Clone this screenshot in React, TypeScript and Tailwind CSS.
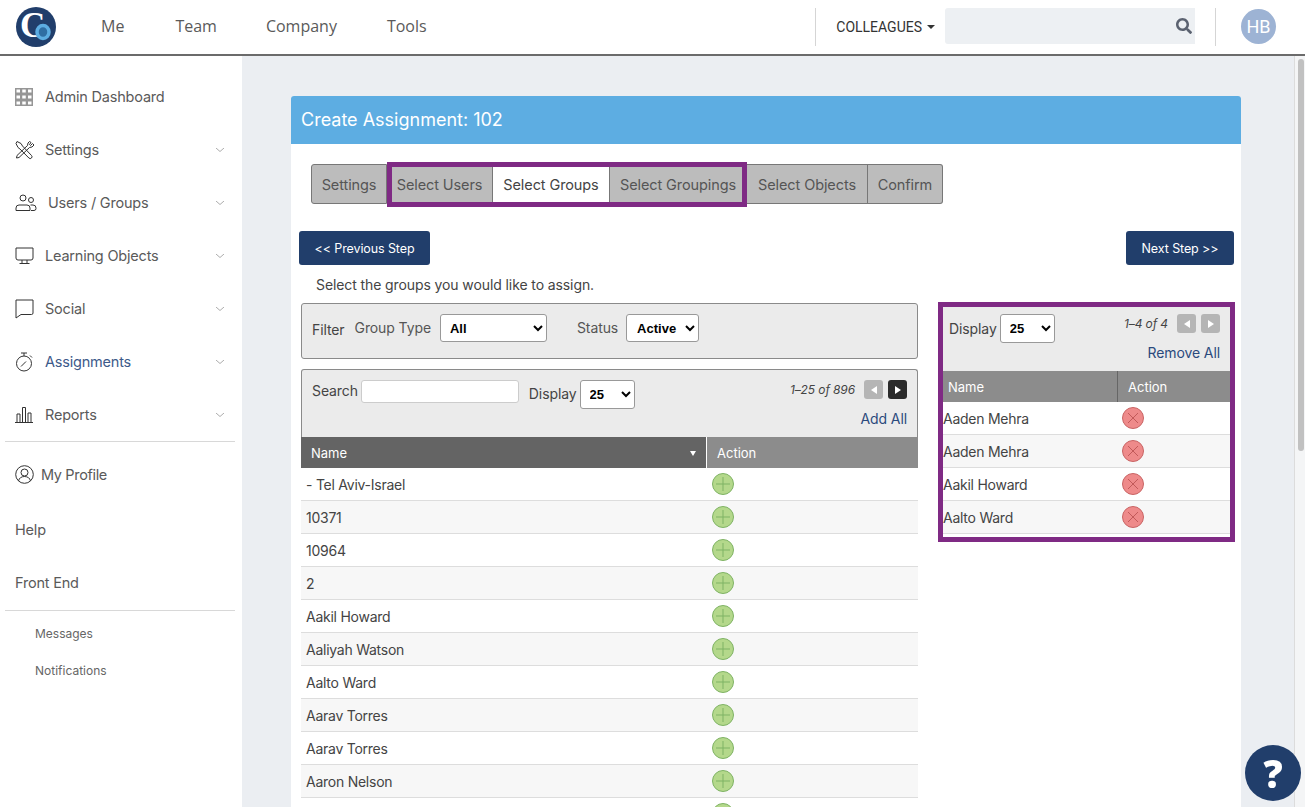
import { FaSearch } from 'react-icons/fa'

const groups = ['- Tel Aviv-Israel', '10371', '10964', '2', 'Aakil Howard', 'Aaliyah Watson', 'Aalto Ward', 'Aarav Torres', 'Aarav Torres', 'Aaron Nelson', '']
const selected = ['Aaden Mehra', 'Aaden Mehra', 'Aakil Howard', 'Aalto Ward']

function GridIcon() {
  return (
    <svg width="18" height="18" viewBox="0 0 18 18" fill="#969696">
      <path fillRule="evenodd" d="M0 0h18v18H0z M1.500 1.500v3h3.500v-3z M7.250 1.500v3h3.500v-3z M13 1.500v3h3.500v-3z M1.500 7.500v3h3.500v-3z M7.250 7.500v3h3.500v-3z M13 7.500v3h3.500v-3z M1.500 13.500v3h3.500v-3z M7.250 13.500v3h3.500v-3z M13 13.500v3h3.500v-3z" />
    </svg>
  )
}

function ToolsIcon() {
  return (
    <svg width="20" height="20" viewBox="0 0 20 20" fill="none" stroke="#333" strokeWidth="1">
      <path d="M2 1.500 6 3.500l1.500 2.500 9 9.500a1.800 1.800 0 0 1-2.600 2.500L5 9 3 7.500 1 3.500z" />
      <path d="m14.500 1.500-1.500 1.500-.5 2.500-10.500 10-.5 2.500 2.500-.5L14.500 7.500 17 7l2-2-1.500-1.500-2 2-1-1 1.500-2z" />
    </svg>
  )
}

function UsersIcon() {
  return (
    <svg width="22" height="18" viewBox="0 0 22 18" fill="none" stroke="#333" strokeWidth="1">
      <circle cx="8" cy="4" r="3" />
      <circle cx="16" cy="6" r="2.500" />
      <path d="M1 16.500v-2.500a3 3 0 0 1 3-3h8a3 3 0 0 1 3 3v2.500z" />
      <path d="M15.500 11h2.500a3 3 0 0 1 3 3v.5a2 2 0 0 1-2 2h-3" />
    </svg>
  )
}

function MonitorIcon() {
  return (
    <svg width="19" height="18" viewBox="0 0 19 18" fill="none" stroke="#333" strokeWidth="1">
      <path d="M1 1h17v10a2 2 0 0 1-2 2H3a2 2 0 0 1-2-2z" />
      <path d="M7 13v3M12 13v3M4.500 16.500h10" />
    </svg>
  )
}

function ChatIcon() {
  return (
    <svg width="19" height="20" viewBox="0 0 19 20" fill="none" stroke="#333" strokeWidth="1">
      <path d="M1 1h17v13a1.500 1.500 0 0 1-1.500 1.500H6L1 19z" />
    </svg>
  )
}

function TimerIcon() {
  return (
    <svg width="19" height="20" viewBox="0 0 19 20" fill="none" stroke="#333" strokeWidth="1">
      <circle cx="9" cy="11.500" r="7.500" />
      <path d="M6 1h6M9 1v3M15 3.500l2 2M6 14.500l5-5" />
    </svg>
  )
}

function BarsIcon() {
  return (
    <svg width="18" height="17" viewBox="0 0 18 17" fill="none" stroke="#333" strokeWidth="1">
      <path d="M0 16.500h18M2 16V8h3v8M7.500 16V1.500h3V16M13 16V7h3v9" />
    </svg>
  )
}

function ProfileIcon() {
  return (
    <svg width="19" height="19" viewBox="0 0 19 19" fill="none" stroke="#333" strokeWidth="1">
      <circle cx="9.500" cy="9.500" r="8.800" />
      <circle cx="9.500" cy="7.500" r="3.500" />
      <path d="M3.500 16c.5-3 3-4.500 6-4.500s5.500 1.500 6 4.500" />
    </svg>
  )
}

function Chevron() {
  return (
    <svg width="8" height="4" viewBox="0 0 8 4" fill="none" stroke="#888" strokeWidth="0.7" className="ml-auto">
      <path d="M0 0l4 3.500L8 0" />
    </svg>
  )
}

function PlusButton() {
  return (
    <span className="w-[22px] h-[22px] rounded-full bg-[#b4d88b] border border-[#7fb364] flex items-center justify-center">
      <svg width="14" height="14" viewBox="0 0 14 14" stroke="#7fb364" strokeWidth="1">
        <path d="M7 0v14M0 7h14" />
      </svg>
    </span>
  )
}

function RemoveButton() {
  return (
    <span className="w-[22px] h-[22px] rounded-full bg-[#ee8a8a] border border-[#c96464] flex items-center justify-center">
      <svg width="12" height="12" viewBox="0 0 12 12" stroke="#c25a5a" strokeWidth="1">
        <path d="M1 1l10 10M11 1 1 11" />
      </svg>
    </span>
  )
}

function PageButton({ dir, active }: { dir: 'left' | 'right'; active?: boolean }) {
  return (
    <span className={`w-[19px] h-[19px] rounded-[3px] flex items-center justify-center ${active ? 'bg-[#2b2b2b]' : 'bg-[#b5b5b5]'}`}>
      <svg width="8" height="8" viewBox="0 0 8 8" fill="#fff">
        {dir === 'left' ? <path d="M7 0v8L1 4z" /> : <path d="M1 0v8l6-4z" />}
      </svg>
    </span>
  )
}

function SideItem({ icon, label, chevron, active, labelClass }: { icon?: React.ReactNode; label: string; chevron?: boolean; active?: boolean; labelClass?: string }) {
  return (
    <div className="h-[53px] flex items-center pl-[15px] pr-[18px]">
      {icon && <span className="w-[30px] shrink-0 flex items-center">{icon}</span>}
      <span className={`text-[14.5px] tracking-[-0.2px] ${active ? 'text-[#3d5a8a]' : 'text-[#5a5a5a]'} ${labelClass || ''}`}>{label}</span>
      {chevron && <Chevron />}
    </div>
  )
}

function Tab({ label, width, active, first, last }: { label: string; width: string; active?: boolean; first?: boolean; last?: boolean }) {
  return (
    <div className={`${width} h-full flex items-center justify-center pt-[2px] border-y border-r border-[#777] text-[14.5px] tracking-[-0.1px] ${active ? 'bg-white text-[#444]' : 'bg-[#bcbcbc] text-[#555]'} ${first ? 'border-l rounded-l-[3px]' : ''} ${last ? 'rounded-r-[3px]' : ''}`}>
      {label}
    </div>
  )
}

export default function App() {
  return (
    <div className="h-screen flex flex-col overflow-hidden bg-white font-['Inter',sans-serif] text-[#444]">
      <header className="h-[56px] shrink-0 flex items-center border-b-2 border-[#6b6b6b] bg-white">
        <svg width="40" height="40" viewBox="0 0 40 40" className="ml-[16px] shrink-0">
          <circle cx="20" cy="20" r="20" fill="#213e6b" />
          <text x="4" y="30" fontFamily="Liberation Serif, serif" fontWeight="700" fontSize="35" fill="#fff">C</text>
          <ellipse cx="27" cy="25" rx="6" ry="6.500" fill="#2f6ea3" stroke="#5dade2" strokeWidth="3.500" />
        </svg>
        <nav className="flex mb-[2px] ml-[45px] font-['Open_Sans',sans-serif] text-[16px] text-[#5a5a5a]">
          <span>Me</span>
          <span className="ml-[51px]">Team</span>
          <span className="ml-[49px]">Company</span>
          <span className="ml-[50px]">Tools</span>
        </nav>
        <div className="ml-auto h-[38px] border-l border-[#d5d5d5] flex items-start pl-[20px]">
          <span className="mt-[9px] font-['Roboto',sans-serif] text-[14px] text-[#333]">COLLEAGUES</span>
          <span className="mt-[17px] ml-[5px] w-0 h-0 border-x-[4px] border-x-transparent border-t-[4px] border-t-[#333]" />
          <div className="ml-[10px] w-[250px] h-[36px] bg-[#edf0f3] rounded-l-[3px] flex items-center justify-end pr-[3px]">
            <FaSearch size={16} className="text-[#5b6270]" />
          </div>
        </div>
        <div className="ml-[20px] h-[38px] border-l border-[#d5d5d5]" />
        <div className="ml-[25px] mr-[29px] mb-[1px] w-[35px] h-[35px] rounded-full bg-[#9db3d4] flex items-center justify-center font-['Roboto',sans-serif] text-[18px] text-white">HB</div>
      </header>

      <div className="flex-1 flex min-h-0">
        <aside className="w-[242px] shrink-0 bg-white pt-[14px]">
          <SideItem icon={<GridIcon />} label="Admin Dashboard" />
          <SideItem icon={<ToolsIcon />} label="Settings" chevron />
          <SideItem icon={<UsersIcon />} label="Users / Groups" chevron labelClass="ml-[3px]" />
          <SideItem icon={<MonitorIcon />} label="Learning Objects" chevron />
          <SideItem icon={<ChatIcon />} label="Social" chevron />
          <SideItem icon={<TimerIcon />} label="Assignments" chevron active />
          <SideItem icon={<BarsIcon />} label="Reports" chevron />
          <div className="ml-[5px] mr-[7px] border-t border-[#d8d8d8]" />
          <div className="h-[65px] flex items-center pl-[15px] text-[14.5px] tracking-[-0.35px] text-[#5a5a5a]">
            <span className="mr-[7px]"><ProfileIcon /></span>My Profile
          </div>
          <div className="h-[45px] flex items-center pl-[15px] text-[14.5px] tracking-[-0.2px] text-[#5a5a5a]">Help</div>
          <div className="h-[58px] flex items-center pl-[15px] pt-[3px] text-[14.5px] tracking-[-0.2px] text-[#5a5a5a]">Front End</div>
          <div className="ml-[5px] mr-[7px] border-t border-[#d8d8d8]" />
          <div className="pl-[35px] pt-[4px] text-[12px] text-[#666]">
            <div className="h-[37px] flex items-center">Messages</div>
            <div className="h-[37px] flex items-center">Notifications</div>
          </div>
        </aside>

        <main className="flex-1 flex bg-[#ebeef2] min-w-0">
          <div className="ml-[49px] mt-[40px] w-[950px] shrink-0 bg-white rounded-t-[3px]">
            <div className="h-[48px] bg-[#5dade2] rounded-t-[3px] flex items-center pl-[10px] pb-[2px] text-[18px] text-white">Create Assignment: 102</div>

            <div className="mt-[20px] ml-[20px] h-[40px] flex">
              <Tab label="Settings" width="w-[76px]" first />
              <div className="relative flex h-full">
                <Tab label="Select Users" width="w-[106px]" />
                <Tab label="Select Groups" width="w-[117px]" active />
                <Tab label="Select Groupings" width="w-[137px]" />
                <div className="absolute left-0 right-0 -top-[2px] -bottom-[3px] border-[5px] border-[#7f2a84] pointer-events-none" />
              </div>
              <Tab label="Select Objects" width="w-[121px]" />
              <Tab label="Confirm" width="w-[75px]" last />
            </div>

            <div className="mt-[27px] pl-[8px] pr-[7px] flex justify-between">
              <button className="h-[34px] w-[131px] pt-[2px] bg-[#213e6b] rounded-[3px] text-[12.5px] tracking-[-0.1px] text-white">&lt;&lt; Previous Step</button>
              <button className="h-[34px] w-[108px] pt-[2px] bg-[#213e6b] rounded-[3px] text-[12.5px] tracking-[-0.1px] text-white">Next Step &gt;&gt;</button>
            </div>

            <div className="mt-[10px] ml-[25px] h-[20px] flex items-center pb-[2px] text-[14px] tracking-[-0.1px]">Select the groups you would like to assign.</div>

            <div className="mt-[7px] flex">
              <div className="ml-[10px] mt-[1px] w-[617px] shrink-0">
                <div className="h-[56px] border border-[#8a8a8a] rounded-[3px] bg-[#ebebeb] flex items-start pt-[10px] pl-[10px] text-[14px] tracking-[-0.1px]">
                  <span className="mt-[5px]">Filter</span>
                  <span className="ml-[10px] mt-[3px] text-[#555]">Group Type</span>
                  <select defaultValue="All" className="ml-[9px] w-[107px] h-[28px] pl-[5px] bg-white border border-[#999] rounded-[3px] font-['Liberation_Sans',sans-serif] font-bold text-[13px] tracking-normal text-black">
                    <option>All</option>
                  </select>
                  <span className="ml-[30px] mt-[3px] text-[#555]">Status</span>
                  <select defaultValue="Active" className="ml-[8px] w-[73px] h-[28px] pl-[6px] bg-white border border-[#999] rounded-[3px] font-['Liberation_Sans',sans-serif] font-bold text-[13px] tracking-normal text-black">
                    <option>Active</option>
                  </select>
                </div>

                <div className="mt-[10px] h-[68px] border border-b-0 border-[#8a8a8a] rounded-t-[3px] bg-[#ebebeb] flex items-start pt-[10px] pl-[10px] pr-[10px] text-[14px] tracking-[-0.1px]">
                  <span>Search</span>
                  <input className="ml-[3px] w-[158px] h-[23px] bg-white border border-[#ccc] rounded-[3px]" />
                  <span className="ml-[10px] mt-[3px]">Display</span>
                  <select defaultValue="25" className="ml-[3px] w-[55px] h-[29px] pl-[5px] bg-white border border-[#999] rounded-[3px] font-['Liberation_Sans',sans-serif] font-bold text-[13px] tracking-normal text-black">
                    <option>25</option>
                  </select>
                  <div className="ml-auto flex flex-col items-end">
                    <div className="flex items-center gap-[5px]">
                      <span className="mr-[4px] text-[12px] italic text-[#444]">1–25 of 896</span>
                      <PageButton dir="left" />
                      <PageButton dir="right" active />
                    </div>
                    <span className="mt-[9px] text-[#2b4a7d]">Add All</span>
                  </div>
                </div>

                <div className="h-[31px] flex text-[13px] text-white">
                  <div className="w-[405px] bg-[#646464] flex items-center justify-between pt-[2px] pl-[10px] pr-[10px]">
                    Name
                    <span className="w-0 h-0 border-x-[3.500px] border-x-transparent border-t-[5px] border-t-white" />
                  </div>
                  <div className="flex-1 ml-[1px] bg-[#8c8c8c] flex items-center pt-[2px] pl-[10px]">Action</div>
                </div>

                {groups.map((name, i) => (
                  <div key={i} className={`h-[33px] flex items-center border-b border-[#ddd] text-[14px] tracking-[-0.25px] ${i % 2 ? 'bg-[#f7f7f7]' : 'bg-white'}`}>
                    <span className="w-[411px] pl-[5px]">{name}</span>
                    <PlusButton />
                  </div>
                ))}
              </div>

              <div className="ml-[20px] w-[297px] h-[240px] shrink-0 border-[5px] border-[#7f2a84] bg-white">
                <div className="h-[64px] bg-[#ebebeb] flex items-start pt-[7px] pl-[6px] pr-[10px] text-[14px] tracking-[-0.1px]">
                  <span className="mt-[4px]">Display</span>
                  <select defaultValue="25" className="ml-[3px] w-[55px] h-[29px] pl-[5px] bg-white border border-[#999] rounded-[3px] font-['Liberation_Sans',sans-serif] font-bold text-[13px] tracking-normal text-black">
                    <option>25</option>
                  </select>
                  <div className="ml-auto flex flex-col items-end">
                    <div className="flex items-center gap-[5px]">
                      <span className="mr-[4px] text-[12px] italic">1–4 of 4</span>
                      <PageButton dir="left" />
                      <PageButton dir="right" />
                    </div>
                    <span className="mt-[9px] text-[#2b4a7d]">Remove All</span>
                  </div>
                </div>
                <div className="h-[31px] bg-[#8c8c8c] flex text-[13px] text-white">
                  <div className="w-[175px] border-r border-[#666] flex items-center pt-[2px] pl-[5px]">Name</div>
                  <div className="flex items-center pt-[2px] pl-[10px]">Action</div>
                </div>
                {selected.map((name, i) => (
                  <div key={i} className={`h-[33px] flex items-center border-b border-[#ddd] text-[14px] tracking-[-0.25px] ${i % 2 ? 'bg-[#f7f7f7]' : 'bg-white'}`}>
                    <span className="w-[179px]">{name}</span>
                    <RemoveButton />
                  </div>
                ))}
              </div>
            </div>
          </div>

          <div className="ml-auto w-[11px] bg-[#f4f5f6] border-l border-[#dcdcdc] pl-[3px] pt-[3px] shrink-0">
            <div className="w-[6px] h-[392px] rounded-full bg-[#c1c1c1]" />
          </div>
        </main>
      </div>

      <div className="fixed left-[1245px] top-[745px] w-[56px] h-[56px] rounded-full bg-[#213e6b] flex items-center justify-center font-['Open_Sans',sans-serif] font-extrabold text-[38px] text-white">?</div>
    </div>
  )
}
